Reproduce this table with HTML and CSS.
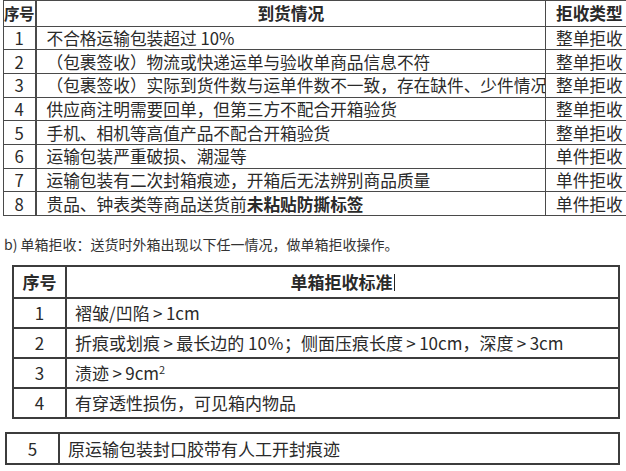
FILE: index.html
```html
<!DOCTYPE html>
<html lang="zh-CN">
<head>
<meta charset="utf-8">
<title>拒收标准</title>
<link rel="stylesheet" href="styles.css">
</head>
<body>
<div class="page">
  <table class="t1">
    <colgroup><col class="c1"><col class="c2"><col class="c3"></colgroup>
    <thead>
      <tr><th class="no">序号</th><th class="desc">到货情况</th><th class="type">拒收类型</th></tr>
    </thead>
    <tbody>
      <tr><td class="no">1</td><td class="desc">不合格运输包装超过 10%</td><td class="type">整单拒收</td></tr>
      <tr><td class="no">2</td><td class="desc">（包裹签收）物流或快递运单与验收单商品信息不符</td><td class="type">整单拒收</td></tr>
      <tr><td class="no">3</td><td class="desc">（包裹签收）实际到货件数与运单件数不一致，存在缺件、少件情况</td><td class="type">整单拒收</td></tr>
      <tr><td class="no">4</td><td class="desc">供应商注明需要回单，但第三方不配合开箱验货</td><td class="type">整单拒收</td></tr>
      <tr><td class="no">5</td><td class="desc">手机、相机等高值产品不配合开箱验货</td><td class="type">整单拒收</td></tr>
      <tr><td class="no">6</td><td class="desc">运输包装严重破损、潮湿等</td><td class="type">单件拒收</td></tr>
      <tr><td class="no">7</td><td class="desc">运输包装有二次封箱痕迹，开箱后无法辨别商品质量</td><td class="type">单件拒收</td></tr>
      <tr><td class="no">8</td><td class="desc">贵品、钟表类等商品送货前<b>未粘贴防撕标签</b></td><td class="type">单件拒收</td></tr>
    </tbody>
  </table>

  <p class="note">b) 单箱拒收：送货时外箱出现以下任一情况，做单箱拒收操作。</p>

  <table class="t2">
    <colgroup><col class="n"><col></colgroup>
    <thead>
      <tr><th class="no">序号</th><th class="std">单箱拒收标准<span class="caret"></span></th></tr>
    </thead>
    <tbody>
      <tr><td class="no">1</td><td>褶皱/凹陷&thinsp;&gt;&thinsp;1cm</td></tr>
      <tr><td class="no">2</td><td>折痕或划痕&thinsp;&gt;&thinsp;最长边的 10％；侧面压痕长度&thinsp;&gt;&thinsp;10cm，深度&thinsp;&gt;&thinsp;3cm</td></tr>
      <tr><td class="no">3</td><td>渍迹&thinsp;&gt;&thinsp;9cm<sup>2</sup></td></tr>
      <tr><td class="no">4</td><td>有穿透性损伤，可见箱内物品</td></tr>
    </tbody>
  </table>

  <table class="t3">
    <colgroup><col class="n"><col></colgroup>
    <tbody>
      <tr><td class="no">5</td><td>原运输包装封口胶带有人工开封痕迹</td></tr>
    </tbody>
  </table>
</div>
</body>
</html>
```

FILE: styles.css
```css
html, body {
  margin: 0;
  padding: 0;
  background: #ffffff;
}
body {
  width: 626px;
  height: 471px;
  overflow: hidden;
  font-family: "Noto Sans CJK SC", "Noto Sans", sans-serif;
  color: #2a2a2a;
}
.page {
  width: 626px;
}

/* ---- table 1 ---- */
.t1 {
  margin-left: 3px;
  width: 680px;
  table-layout: fixed;
  border-collapse: collapse;
  font-size: 16.7px;
  line-height: 20px;
}
.t1 .c1 { width: 32px; }
.t1 .c2 { width: 510px; }
.t1 .c3 { width: 138px; }
.t1 th, .t1 td {
  border: 1.5px solid #4a4a4a;
  padding: 0;
  height: 22.7px;
  white-space: nowrap;
  overflow: hidden;
  font-weight: normal;
}
.t1 th {
  height: 24.5px;
  font-weight: bold;
}
.t1 th.no {
  text-align: left;
  font-size: 15.5px;
  letter-spacing: -0.5px;
  overflow: visible;
}
.t1 th.desc { text-align: center; }
.t1 .no { text-align: center; border-right-width: 2px; }
.t1 td.desc { padding-left: 10px; text-align: left; }
.t1 .type { padding-left: 10px; text-align: left; }
.t1 b { font-weight: bold; }

/* ---- note ---- */
.note {
  margin: 18px 0 11px 4px;
  font-size: 14px;
  line-height: 20px;
  color: #333333;
}

/* ---- table 2 / 3 ---- */
.t2, .t3 {
  table-layout: fixed;
  border-collapse: collapse;
  font-size: 17px;
  line-height: 22px;
}
.t2 {
  margin-left: 12px;
  width: 608px;
}
.t3 {
  margin-left: 5px;
  margin-top: 13px;
  width: 615px;
}
.t2 .n, .t3 .n { width: 53px; }
.t2 th, .t2 td, .t3 td {
  border: 2px solid #3c3c3c;
  padding: 0 0 0 8px;
  height: 28px;
  white-space: nowrap;
  text-align: left;
}
.t2 th {
  height: 30px;
  font-weight: bold;
  text-align: center;
  padding: 0;
}
.t3 td { height: 29px; }
.t2 .no, .t3 .no {
  text-align: center;
  padding: 0;
}
.t2 sup {
  font-size: 11px;
  line-height: 0;
  vertical-align: 6px;
}
.caret {
  display: inline-block;
  width: 0;
  height: 17px;
  border-left: 1px solid #222;
  margin-left: 1px;
  vertical-align: -2px;
}
```
